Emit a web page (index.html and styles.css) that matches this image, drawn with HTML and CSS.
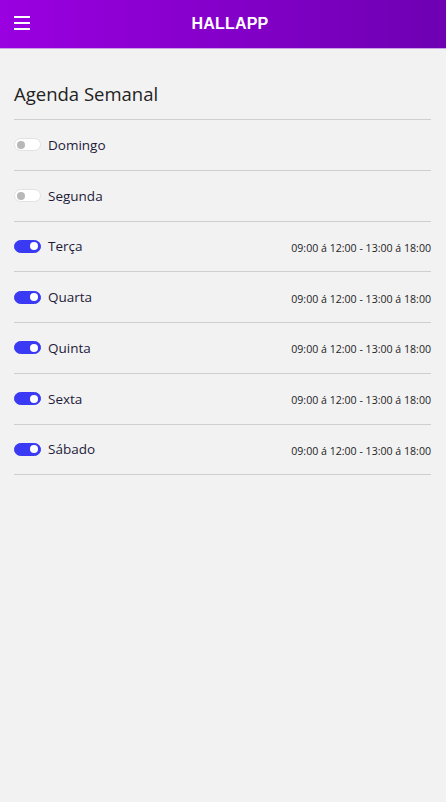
FILE: index.html
```html
<!DOCTYPE html>
<html lang="pt">
<head>
    <meta charset="UTF-8">
    <meta name="viewport" content="width=device-width, initial-scale=1.0">
    <title>HALLAPP</title>
    <link rel="stylesheet" href="styles.css">
</head>
<body>
    <header class="topbar">
        <button class="menu-btn" aria-label="Menu">
            <span></span><span></span><span></span>
        </button>
        <h1 class="brand">HALLAPP</h1>
    </header>

    <main class="content">
        <h2 class="page-title">Agenda Semanal</h2>
        <ul class="week-list">
            <li class="day-row">
                <span class="toggle"></span>
                <span class="day-name">Domingo</span>
            </li>
            <li class="day-row">
                <span class="toggle"></span>
                <span class="day-name">Segunda</span>
            </li>
            <li class="day-row">
                <span class="toggle on"></span>
                <span class="day-name">Terça</span>
                <span class="hours">09:00 á 12:00 - 13:00 á 18:00</span>
            </li>
            <li class="day-row">
                <span class="toggle on"></span>
                <span class="day-name">Quarta</span>
                <span class="hours">09:00 á 12:00 - 13:00 á 18:00</span>
            </li>
            <li class="day-row">
                <span class="toggle on"></span>
                <span class="day-name">Quinta</span>
                <span class="hours">09:00 á 12:00 - 13:00 á 18:00</span>
            </li>
            <li class="day-row">
                <span class="toggle on"></span>
                <span class="day-name">Sexta</span>
                <span class="hours">09:00 á 12:00 - 13:00 á 18:00</span>
            </li>
            <li class="day-row">
                <span class="toggle on"></span>
                <span class="day-name">Sábado</span>
                <span class="hours">09:00 á 12:00 - 13:00 á 18:00</span>
            </li>
        </ul>
    </main>
</body>
</html>
```

FILE: styles.css
```css
body {
    margin: 0;
    background-color: #f2f2f2;
    font-family: "Open Sans", "Noto Sans", Arial, sans-serif;
    color: #222;
}

.topbar {
    height: 48px;
    display: flex;
    align-items: center;
    justify-content: center;
    position: relative;
    background: linear-gradient(90deg, #9a00e0, #6e00b2);
    border-bottom: 1px solid #c9a3e6;
}

.menu-btn {
    position: absolute;
    left: 14px;
    top: 16px;
    width: 16px;
    height: 14px;
    padding: 0;
    border: none;
    background: none;
    display: flex;
    flex-direction: column;
    justify-content: space-between;
    cursor: pointer;
}

.menu-btn span {
    display: block;
    height: 2px;
    background-color: #fff;
}

.brand {
    margin: 0 0 0 14px;
    color: #fff;
    font-family: "Liberation Sans", Arial, sans-serif;
    font-size: 16px;
    font-weight: bold;
    letter-spacing: 0.2px;
}

.content {
    padding: 31px 15px 0 14px;
}

.page-title {
    margin: 0;
    font-size: 18.5px;
    font-weight: normal;
    color: #222;
    line-height: 28px;
    padding-bottom: 11px;
    border-bottom: 1px solid #cfcfcf;
}

.week-list {
    list-style: none;
    margin: 0;
    padding: 0;
}

.day-row {
    height: 49.75px;
    display: flex;
    align-items: center;
    border-bottom: 1px solid #cfcfcf;
}

.toggle {
    width: 27px;
    height: 13px;
    box-sizing: border-box;
    border-radius: 7px;
    background-color: #fff;
    border: 1px solid #e2e2e2;
    position: relative;
    margin-right: 7px;
}

.toggle::after {
    content: "";
    position: absolute;
    top: 1.5px;
    left: 2px;
    width: 8px;
    height: 8px;
    border-radius: 50%;
    background-color: #b8b8b8;
}

.toggle.on {
    background-color: #3a3af5;
    border-color: #3a3af5;
}

.toggle.on::after {
    left: auto;
    right: 2px;
    background-color: #fff;
}

.day-name {
    font-size: 13.5px;
    color: #1e1b3a;
}

.hours {
    margin-left: auto;
    margin-top: 3px;
    font-size: 10.6px;
    color: #222;
}
```
